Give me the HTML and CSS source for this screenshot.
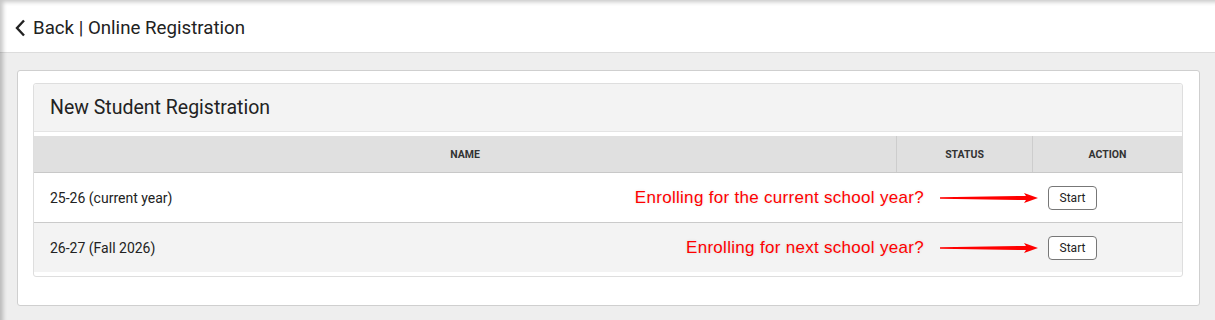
FILE: index.html
```html
<!DOCTYPE html>
<html>
<head>
<meta charset="utf-8">
<link rel="stylesheet" href="styles.css">
</head>
<body>
<header class="topbar">
  <svg class="chev" width="12" height="18" viewBox="0 0 12 18"><polyline points="10,1.5 3,9 10,16.5" fill="none" stroke="#222" stroke-width="2.4"/></svg>
  <span class="title">Back | Online Registration</span>
</header>
<main class="page">
  <section class="outer">
    <div class="card">
      <div class="card-head">New Student Registration</div>
      <div class="table">
        <div class="row head">
          <div class="cell c-name">NAME</div>
          <div class="cell c-status">STATUS</div>
          <div class="cell c-action">ACTION</div>
        </div>
        <div class="row body odd">
          <div class="cell c-name">25-26 (current year)</div>
          <div class="cell c-status"></div>
          <div class="cell c-action"><button class="btn">Start</button></div>
          <div class="note"><span class="note-text">Enrolling for the current school year?</span>
            <svg class="arrow" width="98" height="10" viewBox="0 0 98 10"><polygon points="0,4.3 86,2.9 84,0 98,5 84,10 86,7.1 0,5.7" fill="#f00"/></svg></div>
        </div>
        <div class="row body even">
          <div class="cell c-name">26-27 (Fall 2026)</div>
          <div class="cell c-status"></div>
          <div class="cell c-action"><button class="btn">Start</button></div>
          <div class="note"><span class="note-text">Enrolling for next school year?</span>
            <svg class="arrow" width="98" height="10" viewBox="0 0 98 10"><polygon points="0,4.3 86,2.9 84,0 98,5 84,10 86,7.1 0,5.7" fill="#f00"/></svg></div>
        </div>
      </div>
    </div>
  </section>
</main>
</body>
</html>
```
FILE: styles.css
```css
html, body {
  margin: 0;
  padding: 0;
}
body {
  background: #eeeeee;
  font-family: Roboto, "Liberation Sans", sans-serif;
  color: #222;
  height: 320px;
  overflow: hidden;
}
body::after {
  content: "";
  position: fixed;
  inset: 0;
  pointer-events: none;
  box-shadow: inset 4px 3px 4px -1px rgba(0, 0, 0, 0.22);
}
.topbar {
  height: 52px;
  background: #fff;
  border-bottom: 1px solid #dcdcdc;
  display: flex;
  align-items: center;
  padding-left: 14px;
  box-sizing: content-box;
}
.chev {
  margin-top: 3px;
  margin-right: 7px;
}
.title {
  font-size: 18.7px;
  color: #222;
  margin-top: 4px;
}
.page {
  padding: 17px 15px 0 17px;
}
.outer {
  background: #fff;
  border: 1px solid #cfcfcf;
  border-radius: 3px;
  padding: 12px 16px 28px 15px;
}
.card {
  border: 1px solid #dedede;
  border-radius: 3px;
  background: #fff;
  padding-bottom: 4px;
}
.card-head {
  background: #f3f3f3;
  height: 47px;
  border-bottom: 1px solid #e4e4e4;
  display: flex;
  align-items: center;
  padding-left: 16px;
  font-size: 19.5px;
  color: #222;
  border-radius: 3px 3px 0 0;
}
.table {
  margin-top: 4px;
}
.row {
  display: grid;
  grid-template-columns: 862px 136px 150px;
  position: relative;
}
.row.head {
  background: #e0e0e0;
  height: 36px;
  border-bottom: 1px solid #c8c8c8;
}
.row.head .cell {
  display: flex;
  align-items: center;
  justify-content: center;
  font-size: 10.5px;
  font-weight: 700;
  color: #333;
}
.row.head .c-status,
.row.head .c-action {
  border-left: 1px solid #cdcdcd;
}
.row.body {
  height: 49px;
}
.row.odd {
  background: #fff;
  border-bottom: 1px solid #cacaca;
}
.row.even {
  background: #f3f3f3;
  height: 49px;
}
.row.body .cell {
  display: flex;
  align-items: center;
}
.row.body .c-name {
  padding-left: 16px;
  font-size: 14px;
  color: #222;
}
.row.body .c-action {
  padding-left: 16px;
}
.btn {
  width: 49px;
  height: 24px;
  border: 1px solid #777;
  border-radius: 4px;
  background: #fff;
  font-family: Roboto, "Liberation Sans", sans-serif;
  font-size: 12px;
  color: #222;
  padding: 0;
  cursor: pointer;
}
.note {
  position: absolute;
  right: 144px;
  top: 0;
  bottom: 0;
  display: flex;
  align-items: center;
  gap: 16px;
}
.note-text {
  font-family: "Liberation Sans", Arial, sans-serif;
  font-size: 17px;
  color: #ff0000;
  letter-spacing: 0.3px;
  text-shadow: 0 0 3px rgba(0, 0, 0, 0.12);
}
.arrow {
  display: block;
}
```
